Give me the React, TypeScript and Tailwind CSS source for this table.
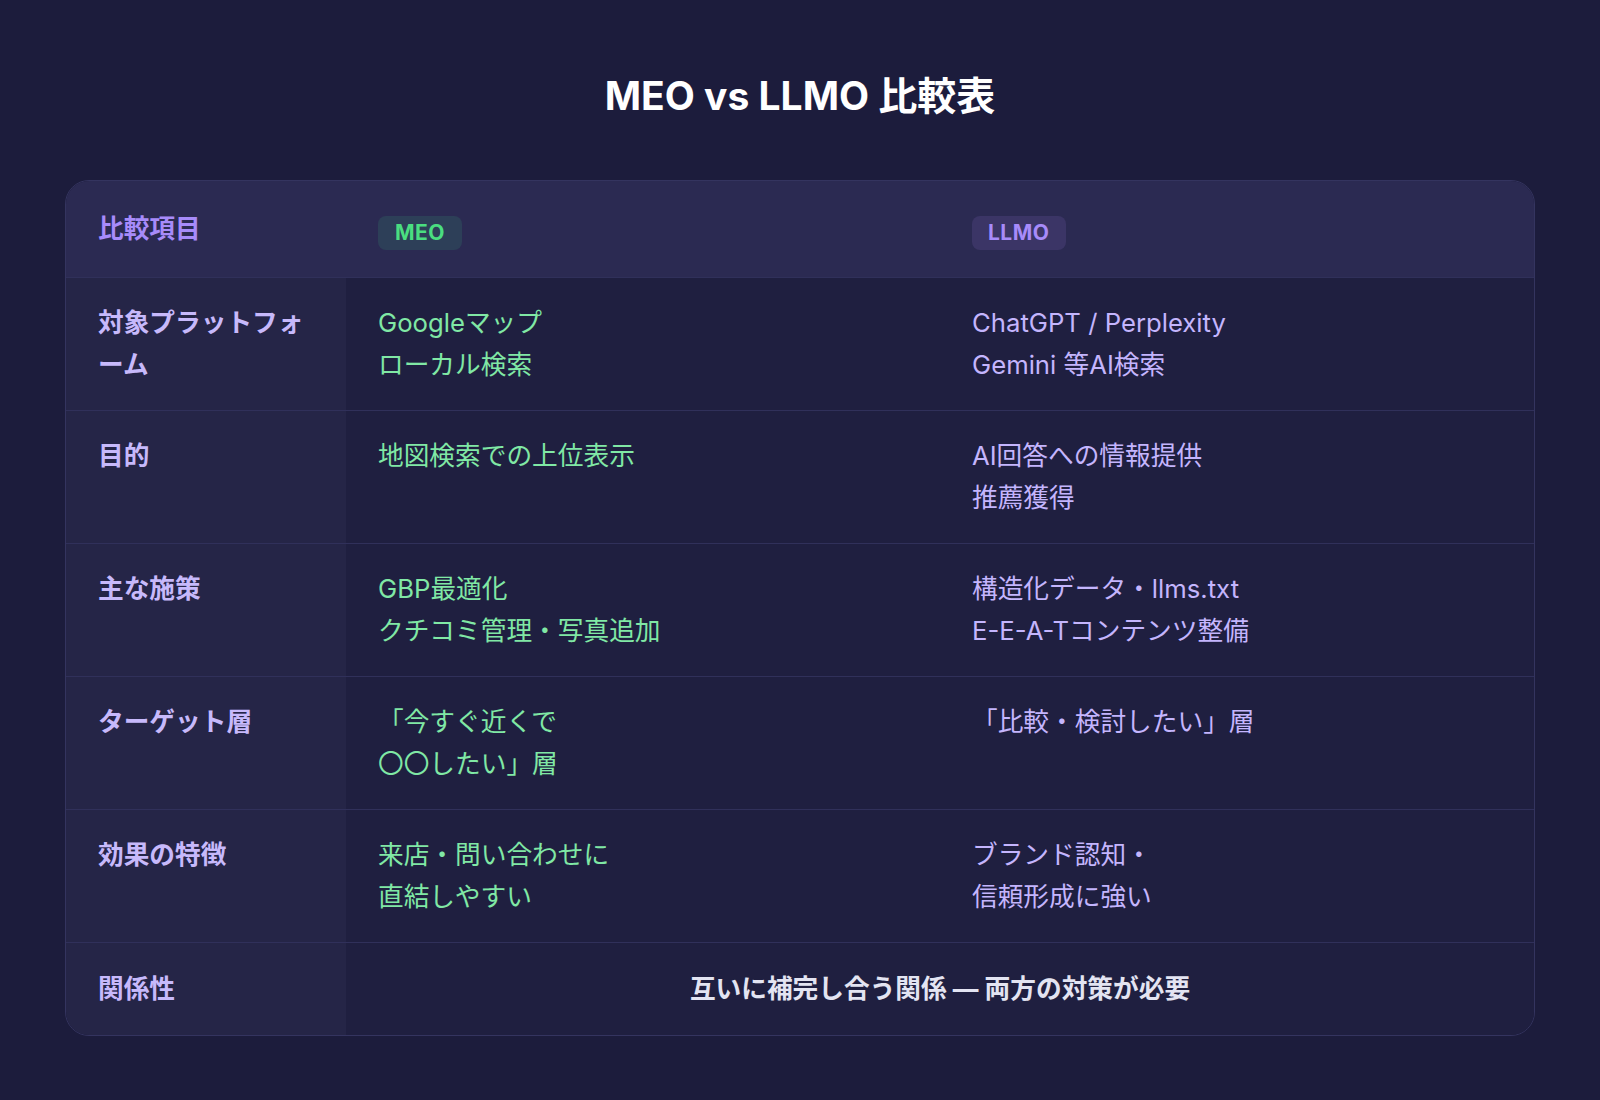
import React from 'react';

const font = { fontFamily: '"Inter", "Noto Sans CJK JP", sans-serif' };

const rows = [
  {
    label: ['対象プラットフォ', 'ーム'],
    meo: ['Googleマップ', 'ローカル検索'],
    llmo: ['ChatGPT / Perplexity', 'Gemini 等AI検索'],
  },
  {
    label: ['目的'],
    meo: ['地図検索での上位表示'],
    llmo: ['AI回答への情報提供', '推薦獲得'],
  },
  {
    label: ['主な施策'],
    meo: ['GBP最適化', 'クチコミ管理・写真追加'],
    llmo: ['構造化データ・llms.txt', 'E-E-A-Tコンテンツ整備'],
  },
  {
    label: ['ターゲット層'],
    meo: ['「今すぐ近くで', '〇〇したい」層'],
    llmo: ['「比較・検討したい」層'],
  },
  {
    label: ['効果の特徴'],
    meo: ['来店・問い合わせに', '直結しやすい'],
    llmo: ['ブランド認知・', '信頼形成に強い'],
  },
];

const Lines: React.FC<{ lines: string[] }> = ({ lines }) => (
  <>
    {lines.map((l, i) => (
      <div key={i}>{l}</div>
    ))}
  </>
);

const App: React.FC = () => {
  return (
    <div className="min-h-screen bg-[#1c1c3c] px-[65px] pt-[72px] pb-16" style={font}>
      <h1 className="text-center text-[39px] leading-[47px] font-bold text-white mb-[61px]">
        MEO vs LLMO 比較表
      </h1>

      <div className="rounded-[24px] border border-[#34345f] overflow-hidden">
        <div className="grid grid-cols-[280px_1fr_1fr] text-[25.7px] leading-[42px]">
          {/* header */}
          <div className="bg-[#2b2a52] h-[96px] px-8 flex items-center font-bold text-[#a78bfa]">
            比較項目
          </div>
          <div className="bg-[#2b2a52] h-[96px] px-8 flex items-center pt-2">
            <span className="rounded-lg bg-[#2d3f58] px-[17px] h-[34px] flex items-center text-[21px] font-bold tracking-[0.5px] text-[#4ade80]">
              MEO
            </span>
          </div>
          <div className="bg-[#2b2a52] h-[96px] px-8 flex items-center pt-2">
            <span className="rounded-lg bg-[#3b3566] px-[16px] h-[34px] flex items-center text-[21px] font-bold tracking-[0.5px] text-[#a78bfa]">
              LLMO
            </span>
          </div>

          {rows.map((r, i) => (
            <React.Fragment key={i}>
              <div className="bg-[#252547] border-t border-[#30305a] px-8 py-6 font-bold text-[#c7b9fb]">
                <Lines lines={r.label} />
              </div>
              <div className="bg-[#1f1f40] border-t border-[#30305a] px-8 py-6 text-[#80e8a5]">
                <Lines lines={r.meo} />
              </div>
              <div className="bg-[#1f1f40] border-t border-[#30305a] px-8 py-6 text-[#c4b5fd]">
                <Lines lines={r.llmo} />
              </div>
            </React.Fragment>
          ))}

          {/* last row */}
          <div className="bg-[#252547] border-t border-[#30305a] px-8 py-[25px] font-bold text-[#c7b9fb]">
            関係性
          </div>
          <div className="col-span-2 bg-[#1f1f40] border-t border-[#30305a] px-8 py-[25px] text-center font-bold text-[#e3e4f2]">
            互いに補完し合う関係 — 両方の対策が必要
          </div>
        </div>
      </div>
    </div>
  );
};

export default App;
